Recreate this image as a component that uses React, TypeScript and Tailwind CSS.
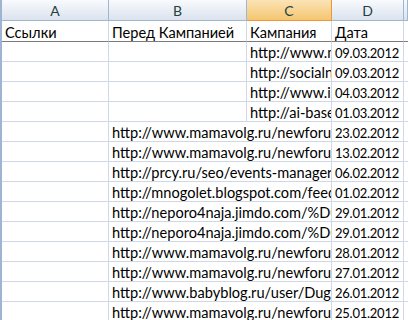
import React from 'react';

type Row = { b?: string; c?: string; d: string };

const rows: Row[] = [
  { c: 'http://www.mamavolg.ru/', d: '09.03.2012' },
  { c: 'http://socialnye-seti.ru/', d: '09.03.2012' },
  { c: 'http://www.internet-marketing.ru/', d: '04.03.2012' },
  { c: 'http://ai-base.ru/', d: '01.03.2012' },
  { b: 'http://www.mamavolg.ru/newforum/', d: '23.02.2012' },
  { b: 'http://www.mamavolg.ru/newforum/', d: '13.02.2012' },
  { b: 'http://prcy.ru/seo/events-manager/', d: '06.02.2012' },
  { b: 'http://mnogolet.blogspot.com/feeds/', d: '01.02.2012' },
  { b: 'http://neporo4naja.jimdo.com/%D0%', d: '29.01.2012' },
  { b: 'http://neporo4naja.jimdo.com/%D0%', d: '29.01.2012' },
  { b: 'http://www.mamavolg.ru/newforum/', d: '28.01.2012' },
  { b: 'http://www.mamavolg.ru/newforum/', d: '27.01.2012' },
  { b: 'http://www.babyblog.ru/user/Dugl', d: '26.01.2012' },
  { b: 'http://www.mamavolg.ru/newforum/', d: '25.01.2012' },
];

const cols = 'grid grid-cols-[107px_138px_85px_72px_1fr]';
const cell = 'h-[20px] border-r border-b border-[#d0d7e5] pl-[3px] pt-[2px] leading-[18px] whitespace-nowrap overflow-hidden';
const date = 'text-[13px] tracking-[-0.25px]';

function Head({ label, active }: { label: string; active?: boolean }) {
  return (
    <div
      className={
        active
          ? 'h-[21px] border-r border-b border-[#f29536] bg-gradient-to-b from-[#fbe3b6] to-[#f4c66e] pt-[1px] text-center text-[14px] leading-[20px] text-[#27413e]'
          : 'h-[21px] border-r border-b border-[#9eb6ce] bg-gradient-to-b from-[#f8fafd] to-[#dbe3ee] pt-[1px] text-center text-[14px] leading-[20px] text-[#27413e]'
      }
    >
      {label}
    </div>
  );
}

export default function App() {
  return (
    <div className="flex h-[320px] w-[408px] overflow-hidden bg-white text-[14.6px] text-black" style={{ fontFamily: 'Lato, "Noto Sans", sans-serif' }}>
      <div className="w-[2px] shrink-0 bg-[#9fb4d2]" />
      <div className="flex-1">
        <div className={cols}>
          <Head label="A" />
          <Head label="B" />
          <Head label="C" active />
          <Head label="D" />
          <Head label="" />
        </div>
        <div className={cols}>
          <div className={cell + ' h-[21px] border-b-[#7b7b7b] pt-[3px]'}>Ссылки</div>
          <div className={cell + ' h-[21px] border-b-[#7b7b7b] pt-[3px]'}>Перед Кампанией</div>
          <div className={cell + ' h-[21px] border-b-[#7b7b7b] pt-[3px]'}>Кампания</div>
          <div className={cell + ' h-[21px] border-b-[#7b7b7b] pt-[3px]'}>Дата</div>
          <div className={cell + ' h-[21px] border-r-0 border-b-[#7b7b7b]'} />
        </div>
        {rows.map((r, i) => (
          <div key={i} className={cols}>
            <div className={cell} />
            {r.b ? (
              <div className={cell + ' col-span-2'}>{r.b}</div>
            ) : (
              <>
                <div className={cell} />
                <div className={cell}>{r.c}</div>
              </>
            )}
            <div className={cell + ' ' + date}>{r.d}</div>
            <div className={cell + ' border-r-0'} />
          </div>
        ))}
      </div>
    </div>
  );
}
